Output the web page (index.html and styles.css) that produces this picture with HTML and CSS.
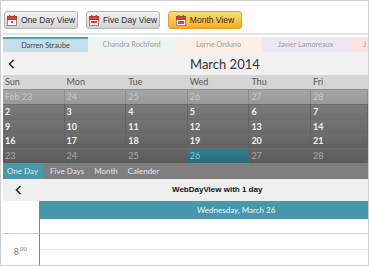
FILE: index.html
```html
<!DOCTYPE html>
<html lang="en">
<head>
    <meta charset="UTF-8">
    <meta name="viewport" content="width=device-width, initial-scale=1.0">
    <title>Schedule</title>
    <link rel="stylesheet" href="styles.css">
</head>
<body>
    <div class="frame">
        <div class="toolbar">
            <button class="view-btn">
                <svg class="cal-icon" width="10" height="11" viewBox="0 0 10 11"><rect x="0.5" y="1.5" width="9" height="9" fill="#fff" stroke="#8a8a8a"/><rect x="0.5" y="1.5" width="9" height="3" fill="#e2452b" stroke="#b33a22"/><rect x="2" y="0" width="1.4" height="3" fill="#666"/><rect x="6.6" y="0" width="1.4" height="3" fill="#666"/><rect x="4" y="6" width="2" height="2" fill="#e2452b"/></svg>
                One Day View
            </button>
            <button class="view-btn">
                <svg class="cal-icon" width="10" height="11" viewBox="0 0 10 11"><rect x="0.5" y="1.5" width="9" height="9" fill="#fff" stroke="#8a8a8a"/><rect x="0.5" y="1.5" width="9" height="3" fill="#e2452b" stroke="#b33a22"/><rect x="2" y="0" width="1.4" height="3" fill="#666"/><rect x="6.6" y="0" width="1.4" height="3" fill="#666"/><rect x="2" y="6" width="6" height="2" fill="#e2452b"/></svg>
                Five Day View
            </button>
            <button class="view-btn active">
                <svg class="cal-icon" width="10" height="11" viewBox="0 0 10 11"><rect x="0.5" y="1.5" width="9" height="9" fill="#fff" stroke="#8a8a8a"/><rect x="0.5" y="1.5" width="9" height="3" fill="#e2452b" stroke="#b33a22"/><rect x="2" y="0" width="1.4" height="3" fill="#666"/><rect x="6.6" y="0" width="1.4" height="3" fill="#666"/><rect x="2" y="6" width="6" height="3" fill="#e2452b"/></svg>
                Month View
            </button>
        </div>

        <div class="resources">
            <div class="resource res-blue">Darren Straube</div>
            <div class="resource res-green">Chandra Rochford</div>
            <div class="resource res-peach">Lorrie Orduno</div>
            <div class="resource res-lilac">Javier Lamoreaux</div>
            <div class="resource res-pink">J</div>
        </div>

        <div class="month">
            <div class="month-head">
                <svg class="prev" width="7" height="10" viewBox="0 0 7 10"><polyline points="5.5,1 1.5,5 5.5,9" fill="none" stroke="#222" stroke-width="1.5"/></svg>
                <span class="month-title">March 2014</span>
            </div>
            <div class="month-grid" id="month-grid">
                <div class="day-name">Sun</div>
                <div class="day-name">Mon</div>
                <div class="day-name">Tue</div>
                <div class="day-name">Wed</div>
                <div class="day-name">Thu</div>
                <div class="day-name">Fri</div>
            </div>
        </div>

        <div class="view-tabs">
            <span class="view-tab selected">One Day</span>
            <span class="view-tab">Five Days</span>
            <span class="view-tab">Month</span>
            <span class="view-tab">Calender</span>
        </div>

        <div class="dayview">
            <div class="dayview-head">
                <svg class="prev" width="7" height="10" viewBox="0 0 7 10"><polyline points="5.5,1 1.5,5 5.5,9" fill="none" stroke="#222" stroke-width="1.5"/></svg>
                <span class="dayview-title">WebDayView with 1 day</span>
            </div>
            <div class="dayview-body">
                <div class="gutter gutter-head"></div>
                <div class="date-bar">Wednesday, March 26</div>
                <div class="gutter allday-gutter"></div>
                <div class="allday"></div>
                <div class="gutter hour-label">8<sup>00</sup></div>
                <div class="hour-slot">
                    <div class="half"></div>
                    <div class="half"></div>
                </div>
            </div>
        </div>
    </div>

    <script>
        // only Sun..Fri fit in the visible width
        const grid = document.getElementById('month-grid');
        const weeks = [
            ['Feb 23', '24', '25', '26', '27', '28'],
            ['2', '3', '4', '5', '6', '7'],
            ['9', '10', '11', '12', '13', '14'],
            ['16', '17', '18', '19', '20', '21'],
            ['23', '24', '25', '26', '27', '28']
        ];

        weeks.forEach((week, w) => {
            week.forEach((day) => {
                const cell = document.createElement('div');
                cell.className = 'day week-' + w;
                if (w === 0) cell.classList.add('other-month');
                if (w === 4 && day === '26') cell.classList.add('today');
                cell.textContent = day;
                grid.appendChild(cell);
            });
        });
    </script>
</body>
</html>
```

FILE: styles.css
```css
body {
    margin: 0;
    background-color: #fff;
    font-family: "Lato", sans-serif;
    overflow: hidden;
}

.frame {
    width: 365px;
    height: 264px;
    border: 1px solid #cfcfcf;
    padding: 0 0 0 2px;
    overflow: hidden;
}

.toolbar {
    display: flex;
    gap: 8px;
    padding: 10px 0 4px 1px;
    border-bottom: 2px solid #e4e4e4;
    margin-bottom: 2px;
}

.view-btn {
    display: flex;
    align-items: center;
    justify-content: center;
    gap: 4px;
    width: 74px;
    height: 18px;
    padding: 0;
    border: 1px solid #b4b4b4;
    border-radius: 3px;
    background: linear-gradient(to bottom, #f4f4f4, #d2d2d2);
    font-family: "Liberation Sans", sans-serif;
    font-size: 8.5px;
    color: #2a2a2a;
    white-space: nowrap;
}

.view-btn.active {
    border-color: #e39d20;
    background: linear-gradient(to bottom, #ffdc78, #f8ab2a);
}

.cal-icon {
    flex: none;
}

.resources {
    display: flex;
    height: 15px;
}

.resource {
    flex: none;
    width: 87px;
    box-sizing: border-box;
    font-size: 7.3px;
    line-height: 15px;
    text-align: center;
    color: #9a9a9a;
    white-space: nowrap;
}

.res-blue {
    width: 85px;
    background-color: #c6dfe8;
    border-top: 2px solid #52a2b8;
    line-height: 13px;
    color: #444;
}

.res-green {
    background-color: #edf3ee;
}

.res-peach {
    background-color: #fdefe4;
}

.res-lilac {
    background-color: #ece8f5;
}

.res-pink {
    width: 19px;
    padding-left: 14px;
    text-align: left;
    background-color: #fbe4e4;
}

.month-head {
    display: flex;
    align-items: center;
    height: 23px;
    background-color: #f1f1f1;
}

.prev {
    margin-left: 5px;
}

.month-title {
    margin-left: 175px;
    font-size: 13px;
    color: #333;
}

.month-grid {
    display: grid;
    grid-template-columns: repeat(5, 61.6px) 1fr;
    grid-template-rows: 14px repeat(5, 14.8px);
}

.day-name {
    background-color: #d5d5d5;
    font-size: 9px;
    line-height: 14px;
    padding-left: 2px;
    color: #555;
}

.day {
    font-size: 9px;
    font-weight: bold;
    line-height: 14px;
    padding-left: 2px;
    color: #f2f2f2;
    border-right: 1px solid #626262;
    border-top: 1px solid #6c6c6c;
    box-sizing: border-box;
}

.week-0 {
    background: linear-gradient(to bottom, #a6a6a6, #999);
    border-color: #8c8c8c;
    color: #c9c9c9;
    font-weight: normal;
}

.week-1 {
    background: linear-gradient(to bottom, #7b7b7b, #707070);
}

.week-2 {
    background: linear-gradient(to bottom, #747474, #696969);
}

.week-3 {
    background: linear-gradient(to bottom, #6d6d6d, #626262);
}

.week-4 {
    background: linear-gradient(to bottom, #666, #5a5a5a);
    color: #aaa;
    font-weight: normal;
}

.week-4.today {
    background: linear-gradient(to bottom, #2f7f8f, #246c7a);
    color: #9cc3cb;
}

.view-tabs {
    display: flex;
    height: 16px;
    background-color: #7e7e7e;
}

.view-tab {
    padding: 0 5px;
    font-size: 8px;
    line-height: 16px;
    color: #e6e6e6;
    white-space: nowrap;
}

.view-tab.selected {
    background-color: #4898ab;
    padding: 0 5px 0 4px;
    margin-right: 2px;
}

.dayview-head {
    display: flex;
    align-items: center;
    height: 22px;
    background-color: #efefef;
}

.dayview-head .prev {
    margin-left: 12px;
}

.dayview-title {
    margin-left: 150px;
    font-family: "Liberation Sans", sans-serif;
    font-size: 8px;
    font-weight: bold;
    color: #111;
}

.dayview-body {
    display: grid;
    grid-template-columns: 37px 1fr;
    grid-template-rows: 18px 15px 32px;
}

.gutter {
    border-right: 1px solid #4898ab;
}

.date-bar {
    background-color: #4898ab;
    color: #eef6f8;
    font-size: 8px;
    line-height: 18px;
    padding-left: 157px;
}

.allday-gutter,
.allday {
    border-bottom: 1px solid #cdcdcd;
}

.hour-label {
    font-size: 9px;
    color: #777;
    text-align: right;
    padding: 11px 12px 0 0;
}

.hour-label sup {
    font-size: 6px;
    margin-left: 1px;
}

.half {
    height: 16px;
    border-bottom: 1px solid #e2e2e2;
    box-sizing: border-box;
}
```
